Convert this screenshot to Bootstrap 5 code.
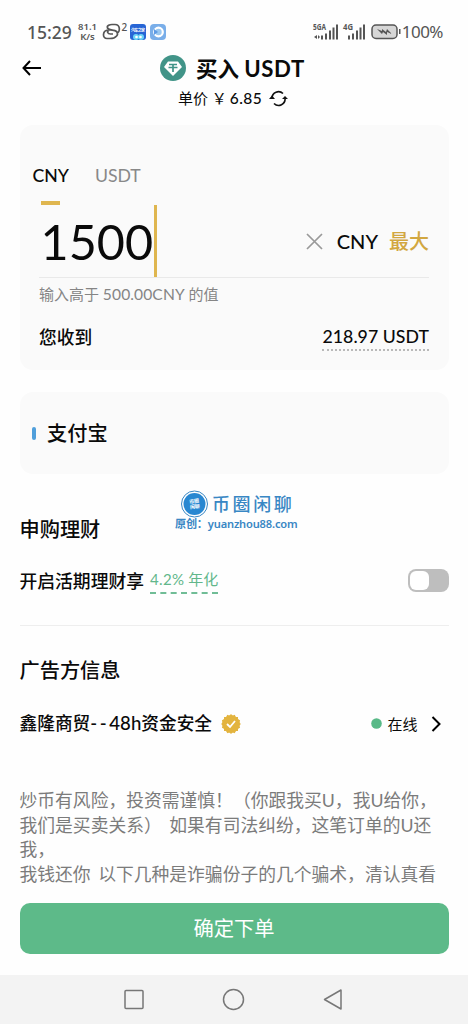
<!DOCTYPE html>
<html lang="zh-CN">
<head>
<meta charset="utf-8">
<meta name="viewport" content="width=device-width, initial-scale=1">
<title>买入 USDT</title>
<link href="https://cdn.jsdelivr.net/npm/bootstrap@5.3.0/dist/css/bootstrap.min.css" rel="stylesheet">
<style>
body{width:468px;height:1024px;overflow:hidden;background:#fefefe;color:#0a0a0a;font-family:Lato,"Noto Sans CJK SC",sans-serif;font-size:17.7px;line-height:24px;text-spacing-trim:space-all;white-space:nowrap}
svg{display:block;flex:none}
.cjk{font-family:"Noto Sans CJK SC",sans-serif}
.medium{font-weight:500}
.status{height:24px;margin-top:20px;padding:0 25px 0 27px;color:#555;font-family:"Noto Sans","Noto Sans CJK SC",sans-serif}
.clock{font-size:17.5px;width:45px;font-weight:500}
.rate{font-size:9.5px;line-height:10px;width:23px;margin-left:4px;font-weight:600;text-align:center}
.pct{font-size:17px;letter-spacing:-.5px}
.topbar{height:32px;margin-top:8px}
.topbar h1{font-size:21.5px;line-height:32px;font-weight:700}
.topbar .coin{letter-spacing:.6px;font-size:22.2px}
.price{height:24px;margin-top:2px;font-size:15px}
.price-num{font-size:15.5px;letter-spacing:.4px;font-weight:500;margin-left:3px}
.panel{background:#fafafa;border-radius:13px;margin:0 19.5px}
.amount-panel{height:245px;margin-top:15px;padding:39px 19.5px 0}
.tabs{margin-left:-6.5px;gap:26px;font-size:17.7px;height:24px}
.tab-off{color:#888;letter-spacing:-.1px}
.tab-mark{width:19px;height:4px;background:#dfb64f;margin:13px 0 0 2px}
.entry{height:73px;border-bottom:1px solid #e9e9e9}
.digits{font-size:48.5px;line-height:74px;width:113px;padding:0 0 0 1.5px}
.caret{width:3px;height:72px;background:#dfb64f;margin-left:2px}
.gold{color:#d2a740}
.hint{font-size:15px;color:#858585;margin-top:4px}
.minimum{font-size:15.6px;letter-spacing:.1px}
.dotted{border-bottom:2px dotted #b9b9b9;line-height:24px;letter-spacing:.05px}
.pay-panel{height:82px;margin-top:22px;padding-left:12.5px}
.pay-mark{width:4px;height:13px;border-radius:2px;background:#509fdb;margin-right:11px}
.h20{font-size:20.2px;font-weight:500;line-height:28px}
.section{padding:0 19.5px}
.brand{left:175px;top:490px;color:#3987c4}
.brand-name{font-size:18px;letter-spacing:2.6px;line-height:28px;font-weight:500}
.brand-url{font-family:"Noto Sans","Noto Sans CJK SC",sans-serif;font-size:11.1px;line-height:11px;font-weight:600;letter-spacing:-.16px}
.yield{color:#62b78b;font-size:15px;border-bottom:2px dashed #70bd96;margin-left:6px;line-height:25px}
.rate-num{letter-spacing:.35px}
.toggle{width:41px;height:23px;border-radius:8px;background:#bebebe;padding:2px}
.knob{width:19px;height:19px;border-radius:6px;background:#fff}
.rule{height:1px;background:#eee;margin:31px 19.5px 0}
.dashes{letter-spacing:2.6px}
.mid{font-size:18.6px}
.notice{height:98px;color:#7b7b7b;font-size:17.8px;line-height:24.5px;margin-top:52px}
.gap-s{word-spacing:3px}
.confirm{height:51px;margin:17px 19.5px 0;background:#5dba89;border-radius:10px;color:#fff;font-size:20.3px;border:0}
.navkeys{height:50px;background:#f3f3f3;margin-top:21px}
</style>
</head>
<body class="d-flex flex-column">
<div class="status d-flex align-items-center flex-shrink-0">
  <span class="clock">15:29</span>
  <span class="rate">81.1<br>K/s</span>
  <svg width="27" height="20" viewBox="0 0 27 20" style="margin-left:3px;overflow:visible" fill="none" stroke="#555" stroke-width="1.700"><path d="M5.500 8C.5 9 0 16.500 5 16.500H8C14 16.500 17.500 12 14.500 9.500C12 7.500 7 9 5.500 6C4.500 3.500 8 2.500 10 2.500H13C18.500 2.500 18.500 10 14.500 11.500M7 8.500C4.500 9 5.500 12 8.500 12H11"/><text x="19.500" y="9" font-size="10" font-family="Noto Sans" font-weight="500" fill="#555" stroke="none">2</text></svg>
  <svg width="38" height="18" viewBox="0 0 38 18"><rect x="1" y="1" width="16" height="16" rx="3" fill="#2765d5"/><text x="2" y="9" font-size="4" font-weight="bold" fill="#fff" textLength="14" font-family="Noto Sans CJK SC">汽车之家</text><circle cx="7" cy="14" r="3" fill="#6cd4f5"/><circle cx="12" cy="14" r="3" fill="#6cd4f5"/><circle cx="7.500" cy="14" r="1.300" fill="#fff"/><circle cx="11.500" cy="14" r="1.300" fill="#fff"/><rect x="21" y="1" width="16" height="16" rx="4" fill="#79aee9"/><circle cx="29.500" cy="9" r="4.300" fill="#9bc8f0" stroke="#fff" stroke-width="2.200"/><path d="M25 6l4 3-4 3z" fill="#5e9be4"/></svg>
  <svg width="90" height="20" viewBox="0 0 90 20" class="ms-auto" fill="#555"><g font-family="Noto Sans" font-size="8" font-weight="700"><text x="1" y="8" textLength="13" lengthAdjust="spacingAndGlyphs">5GA</text><text x="31" y="8" textLength="10" lengthAdjust="spacingAndGlyphs">4G</text></g><path d="M2 15l3-2v4zM8 15l-2-2v4zM9 13.500h2v4H9zM13 11.500h2v6h-2zM17 8.500h2v9h-2zM20.500 5.500h2v12h-2zM24 2.500h2v15h-2zM36 13.500h2v4h-2zM40 11.500h2v6h-2zM44 8.500h2v9h-2zM47.500 5.500h2v12h-2zM51 2.500h2v15h-2z"/><rect x="60" y="3" width="25" height="13.500" rx="4" fill="#d6d6d6" stroke="#555" stroke-width="1.500"/><path d="M65 7l5 2V7l4 3 1-3 5 5-5-2v3l-4-3-1 2zM87 7h1.500v5H87z"/></svg>
  <span class="pct">100%</span>
</div>

<header class="topbar d-flex align-items-center flex-shrink-0">
  <svg width="20" height="16" viewBox="0 0 20 16" fill="none" stroke="#000" stroke-width="2" style="margin-left:22px"><path d="M8 1L1.500 8L8 15M1.500 8H19"/></svg>
  <svg width="26" height="26" viewBox="0 0 26 26" style="margin-left:118px"><circle cx="13" cy="13" r="13" fill="#419488"/><path d="M8 6.500H18L22 12L13 21L4 12Z" fill="#fff"/><path d="M9 9.500H17M13 9.500V17M8.500 12.500H17.500" fill="none" stroke="#419488" stroke-width="1.700"/></svg>
  <h1 class="mb-0" style="margin-left:10px"><span class="cjk">买入</span> <span class="coin">USDT</span></h1>
</header>
<div class="price d-flex align-items-center flex-shrink-0" style="padding-left:178px">
  <span>单价 <span class="cjk">￥</span><span class="price-num">6.85</span></span>
  <svg width="19" height="17" viewBox="0 0 19 17" fill="none" stroke="#111" stroke-width="1.600" style="margin-left:7px"><path d="M3 8A6.500 6.500 0 0 1 14 3.500M16 8A6.500 6.500 0 0 1 5 13.500"/><path d="M0 9L3 5.500L6 9ZM13 9L16 6L19 9Z" fill="#111" stroke="none"/></svg>
</div>

<main class="d-flex flex-column">
<section class="panel amount-panel">
  <div class="tabs d-flex align-items-center"><span class="medium">CNY</span><span class="tab-off">USDT</span></div>
  <div class="tab-mark"></div>
  <div class="entry d-flex align-items-center">
    <span class="digits">1500</span><span class="caret"></span>
    <svg width="17" height="17" viewBox="0 0 17 17" stroke="#999" stroke-width="1.700" class="ms-auto"><path d="M1 1L16 16M16 1L1 16"/></svg>
    <span class="medium" style="margin-left:14px;font-size:20px">CNY</span>
    <span class="gold medium cjk" style="margin-left:11px;font-size:20px">最大</span>
  </div>
  <div class="hint"><span class="cjk">输入高于</span> <span class="minimum">500.00CNY</span> <span class="cjk">的值</span></div>
  <div class="d-flex align-items-center justify-content-between medium" style="margin-top:19px"><span>您收到</span><span class="dotted">218.97 USDT</span></div>
</section>
<section class="panel pay-panel d-flex align-items-center"><span class="pay-mark"></span><span class="h20">支付宝</span></section>

<section class="section" style="margin-top:41px">
  <h2 class="h20 mb-0">申购理财</h2>
  <div class="d-flex align-items-center" style="margin-top:24px"><span class="medium" style="font-size:17.8px">开启活期理财享</span><span class="yield"><span class="rate-num">4.2%</span> 年化</span><span class="toggle ms-auto"><span class="knob d-block"></span></span></div>
</section>
<div class="rule"></div>
<section class="section" style="margin-top:30px">
  <h2 class="h20 mb-0">广告方信息</h2>
  <div class="d-flex align-items-center" style="margin-top:27px"><span class="medium">鑫隆商贸<span class="mid"><span class="dashes">--</span>48h</span>资金安全</span>
    <svg width="22" height="22" viewBox="-11 -11 22 22" style="margin-left:8px"><g fill="#e3b43f"><circle r="8.800"/><path d="M-7-7H7V7H-7Z"/><path d="M-7-7H7V7H-7Z" transform="rotate(22.500)"/><path d="M-7-7H7V7H-7Z" transform="rotate(45)"/><path d="M-7-7H7V7H-7Z" transform="rotate(67.500)"/></g><path d="M-4 0L-1 3L4-3" fill="none" stroke="#fff" stroke-width="1.800"/></svg>
    <svg width="11" height="11" viewBox="0 0 11 11" class="ms-auto"><circle cx="5.500" cy="5.500" r="5.300" fill="#58b987"/></svg>
    <span style="margin-left:5px;font-size:15px">在线</span>
    <svg width="10" height="16" viewBox="0 0 10 16" fill="none" stroke="#000" stroke-width="2" style="margin-left:13px;margin-right:8px"><path d="M1.500 1L8.500 8L1.500 15"/></svg></div>
  <p class="notice mb-0">炒币有风险，投资需谨慎！（你跟我买U，我U给你，<br><span class="gap-s">我们是买卖关系） 如果有司法纠纷，这笔订单的U还</span><br>我，<br><span class="gap-s">我钱还你 以下几种是诈骗份子的几个骗术，清认真看</span></p>
</section>
<button class="btn confirm p-0">确定下单</button>
</main>
<nav class="navkeys flex-shrink-0"><svg width="468" height="49" viewBox="0 0 468 49" fill="none" stroke="#777" stroke-width="1.500"><rect x="125" y="15.500" width="18" height="18" rx="1"/><circle cx="233.500" cy="24.500" r="10"/><path d="M341 15V34L324.500 24.500Z" stroke-linejoin="round"/></svg></nav>

<div class="brand position-absolute">
  <div class="d-flex align-items-center"><svg width="27" height="28" viewBox="0 0 27 28" style="margin-left:6px"><circle cx="13.500" cy="14" r="13" fill="none" stroke="#3987c4"/><circle cx="13.500" cy="14" r="11" fill="#2787d1"/><g fill="#fff" font-family="Noto Sans CJK SC" font-size="5" font-weight="700" transform="rotate(-8 13 14)"><text x="8.500" y="13">币圈</text><text x="8.500" y="18.500">闲聊</text></g></svg><span class="brand-name" style="margin-left:4px">币圈闲聊</span></div>
  <div class="brand-url">原创：yuanzhou88.com</div>
</div>
<script src="https://cdn.jsdelivr.net/npm/bootstrap@5.3.0/dist/js/bootstrap.bundle.min.js"></script>
</body>
</html>
